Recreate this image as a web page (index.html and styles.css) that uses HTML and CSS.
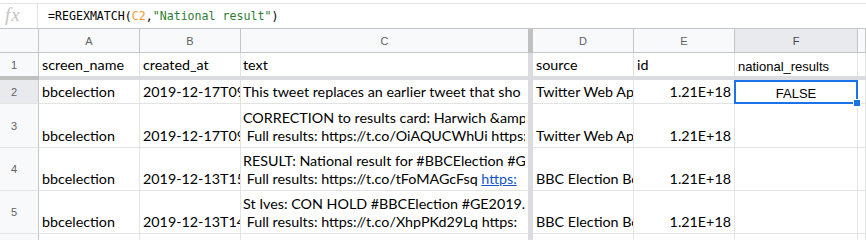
FILE: index.html
```html
<!DOCTYPE html>
<html>
<head>
<meta charset="utf-8">
<link rel="stylesheet" href="styles.css">
</head>
<body>
<div class="fbar">
  <div class="fx">fx</div>
  <div class="formula">=REGEXMATCH(<span class="ref">C2</span>,<span class="str">"National result"</span>)</div>
</div>
<div class="sheet">
  <!-- header row -->
  <div class="hd corner"></div>
  <div class="hd">A</div>
  <div class="hd">B</div>
  <div class="hd nob">C</div>
  <div class="vdiv dark"></div>
  <div class="hd">D</div>
  <div class="hd">E</div>
  <div class="hd sel">F</div>
  <div class="hd"></div>

  <!-- row 1 -->
  <div class="rn nb">1</div>
  <div class="c nb">screen_name</div>
  <div class="c nb">created_at</div>
  <div class="c nb nob">text</div>
  <div class="vdiv"></div>
  <div class="c nb">source</div>
  <div class="c nb">id</div>
  <div class="c nb arial">national_results</div>
  <div class="c nb"></div>

  <!-- frozen row divider -->
  <div class="hdiv dark"></div>
  <div class="hdiv span"></div>

  <!-- row 2 -->
  <div class="rn selrow">2</div>
  <div class="c">bbcelection</div>
  <div class="c">2019-12-17T09</div>
  <div class="c nob">This tweet replaces an earlier tweet that sho</div>
  <div class="vdiv"></div>
  <div class="c">Twitter Web Ap</div>
  <div class="c num">1.21E+18</div>
  <div class="c arial center active">FALSE<span class="handle"></span></div>
  <div class="c"></div>

  <!-- row 3 -->
  <div class="rn">3</div>
  <div class="c">bbcelection</div>
  <div class="c">2019-12-17T09</div>
  <div class="c nob"><span class="ln">CORRECTION to results card: Harwich &amp;amp</span><span class="ln"> Full results: https://t.co/OiAQUCWhUi https:</span></div>
  <div class="vdiv"></div>
  <div class="c">Twitter Web Ap</div>
  <div class="c num">1.21E+18</div>
  <div class="c"></div>
  <div class="c"></div>

  <!-- row 4 -->
  <div class="rn">4</div>
  <div class="c">bbcelection</div>
  <div class="c">2019-12-13T15</div>
  <div class="c nob"><span class="ln">RESULT: National result for #BBCElection #GE</span><span class="ln"> Full results: https://t.co/tFoMAGcFsq <a class="link" href="#">https:</a></span></div>
  <div class="vdiv"></div>
  <div class="c">BBC Election Bo</div>
  <div class="c num">1.21E+18</div>
  <div class="c"></div>
  <div class="c"></div>

  <!-- row 5 -->
  <div class="rn">5</div>
  <div class="c">bbcelection</div>
  <div class="c">2019-12-13T14</div>
  <div class="c nob"><span class="ln">St Ives: CON HOLD #BBCElection #GE2019.</span><span class="ln"> Full results: https://t.co/XhpPKd29Lq https:</span></div>
  <div class="vdiv"></div>
  <div class="c">BBC Election Bo</div>
  <div class="c num">1.21E+18</div>
  <div class="c"></div>
  <div class="c"></div>

  <!-- row 6 -->
  <div class="rn">6</div>
  <div class="c"></div>
  <div class="c"></div>
  <div class="c nob"></div>
  <div class="vdiv"></div>
  <div class="c"></div>
  <div class="c"></div>
  <div class="c"></div>
  <div class="c"></div>
</div>
</body>
</html>
```

FILE: styles.css
```css
html, body {
  margin: 0;
  padding: 0;
  background: #ffffff;
  overflow: hidden;
}
body {
  width: 866px;
  height: 240px;
}
.fbar {
  margin-top: 3px;
  height: 24px;
  border-top: 1px solid #e2e3e3;
  border-bottom: 1px solid #c4c7c5;
  display: flex;
  align-items: stretch;
}
.fx {
  box-sizing: border-box;
  width: 38px;
  border-right: 1px solid #e2e3e3;
  font-family: "Liberation Serif", serif;
  font-style: italic;
  font-size: 19px;
  color: #c4c4c4;
  padding-left: 5px;
  line-height: 22px;
  letter-spacing: 1px;
}
.formula {
  padding-left: 10px;
  font-family: "DejaVu Sans Mono", monospace;
  font-size: 11.6px;
  line-height: 24px;
  color: #000;
  white-space: pre;
}
.formula .ref { color: #f29a2e; }
.formula .str { color: #2c7d32; }

.sheet {
  display: grid;
  grid-template-columns: 39px 101px 101px 287px 5px 101px 101px 123px 1fr;
  grid-template-rows: 24px 23px 4px 24px 44px 43px 43px 20px;
  height: 211px;
  overflow: hidden;
}
.sheet > div {
  box-sizing: border-box;
  overflow: hidden;
  white-space: pre;
}
.hd {
  background: #f8f9fa;
  border-right: 1px solid #c4c7c5;
  border-bottom: 1px solid #c4c7c5;
  font-family: "Liberation Sans", Arial, sans-serif;
  font-size: 11px;
  color: #5f6368;
  display: flex;
  align-items: center;
  justify-content: center;
}
.hd.sel {
  background: #e8eaed;
  color: #444;
}
.hd.nob { border-right: none; }
.rn {
  background: #f8f9fa;
  border-right: 1px solid #c4c7c5;
  border-bottom: 1px solid #e2e3e3;
  font-family: "Liberation Sans", Arial, sans-serif;
  font-size: 11px;
  color: #5f6368;
  display: flex;
  align-items: center;
  padding-left: 11px;
}
.rn.selrow { background: #e8eaed; }
.c {
  border-right: 1px solid #e2e3e3;
  border-bottom: 1px solid #e2e3e3;
  font-family: Lato, "Liberation Sans", sans-serif;
  font-size: 14.3px;
  line-height: 18px;
  color: #000;
  padding: 0 3px 2px 3px;
  display: flex;
  flex-direction: column;
  justify-content: flex-end;
}
.c .ln {
  display: block;
  overflow: hidden;
}
.c.nob { border-right: none; padding-left: 2px; }
.nb { border-bottom: none !important; }
.c.num { align-items: flex-end; }
.c.arial {
  font-family: "Liberation Sans", Arial, sans-serif;
  font-size: 13px;
  line-height: 17px;
  padding-bottom: 1px;
}
.c.center { align-items: center; }
.c.active { position: relative; overflow: visible !important; }
.c.active::after {
  content: "";
  position: absolute;
  top: 0;
  left: -1px;
  right: -1px;
  bottom: -1px;
  border: 2px solid #1a73e8;
  pointer-events: none;
}
.handle {
  position: absolute;
  right: -3px;
  bottom: -3px;
  width: 6px;
  height: 6px;
  background: #1a73e8;
  box-shadow: 0 0 0 1px #ffffff;
  z-index: 2;
}
.vdiv { background: #dadce0; }
.vdiv.dark { background: #c0c0c0; }
.hdiv { background: #dadce0; }
.hdiv.dark { background: #c0c0c0; }
.hdiv.span { grid-column: 2 / -1; }
.link {
  color: #1155cc;
  text-decoration: underline;
}
```
